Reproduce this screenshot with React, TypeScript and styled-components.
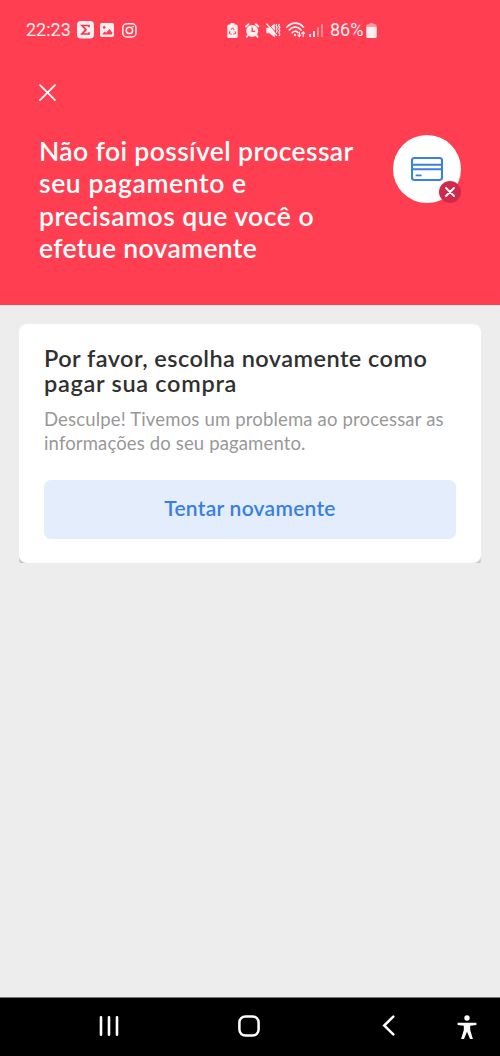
import React from "react";
import styled, { createGlobalStyle } from "styled-components";

const GlobalStyle = createGlobalStyle`
  * { box-sizing: border-box; }
  body { margin: 0; background: #ededed; }
  svg { display: block; flex: none; }
`;

const Screen = styled.main`
  width: 500px;
  height: 1056px;
  display: flex;
  flex-direction: column;
  background: #ededed;
  font-family: Lato, "Open Sans", sans-serif;
  overflow: hidden;
`;

const Header = styled.header`
  height: 305px;
  background: #ff3f51;
  color: #fff;
`;

const StatusBar = styled.div`
  display: flex;
  align-items: center;
  height: 60px;
  padding: 0 123px 0 26px;
  font: 400 18px/20px Roboto, sans-serif;
  color: #ffeef0;
`;

const StatusGroup = styled.div<{ $push?: boolean }>`
  display: flex;
  align-items: center;
  margin-left: ${(p) => (p.$push ? "auto" : "0")};
`;

const Glyph = styled.svg<{ $gap: number }>`
  margin-left: ${(p) => p.$gap}px;
`;

const StatusText = styled.span<{ $gap?: number; $width: number }>`
  margin-left: ${(p) => p.$gap ?? 0}px;
  width: ${(p) => p.$width}px;
  white-space: nowrap;
`;

const CloseButton = styled.button`
  display: block;
  margin: 23px 0 0 38px;
  padding: 0;
  border: 0;
  background: none;
  color: #fff;
`;

const Hero = styled.div`
  display: flex;
  justify-content: space-between;
  padding: 32px 39px 0;
`;

const Title = styled.h1`
  margin: 0;
  font-size: 26.5px;
  line-height: 32.4px;
  font-weight: 600;
`;

const Line = styled.span<{ $spacing: number }>`
  display: block;
  white-space: nowrap;
  letter-spacing: ${(p) => p.$spacing}px;
`;

const CardBadge = styled.div`
  position: relative;
  display: grid;
  place-items: center;
  width: 68px;
  height: 68px;
  border-radius: 50%;
  background: #fff;
`;

const ErrorMark = styled.div`
  position: absolute;
  right: 0;
  bottom: 0;
  display: grid;
  place-items: center;
  width: 22px;
  height: 22px;
  border-radius: 50%;
  background: #d1294b;
`;

const Content = styled.section`
  flex: 1;
  padding: 19px 19px 0;
`;

const CardShade = styled.div`
  border-radius: 8px 8px 2px 2px;
  background: linear-gradient(#e6e6e6 97%, #c4c4c4);
`;

const Card = styled.article`
  height: 239px;
  padding: 22px 25px 25px;
  border-radius: 8px;
  background: #fff;
`;

const CardTitle = styled.h2`
  margin: 0;
  color: #303030;
  font-size: 23.5px;
  line-height: 24.5px;
  font-weight: 600;
`;

const CardText = styled.p`
  margin: 12px 0 0;
  color: #989898;
  font-size: 18.5px;
  line-height: 24.3px;
  font-weight: 400;
`;

const RetryButton = styled.button`
  display: flex;
  align-items: center;
  justify-content: center;
  width: 100%;
  height: 59px;
  margin-top: 24px;
  padding: 0 0 2px;
  border: 0;
  border-radius: 7px;
  background: #e3edfb;
  color: #3a7fe0;
  font: 600 21px/24px Lato, sans-serif;
`;

const NavBar = styled.nav`
  display: flex;
  align-items: center;
  height: 59px;
  padding: 0 22px 3px 99px;
  border-top: 1px solid #777;
  background: #000;
`;

const NavIcon = styled.svg<{ $before?: number; $drop?: number }>`
  margin-left: ${(p) => p.$before ?? 0}px;
  margin-top: ${(p) => p.$drop ?? 0}px;
`;

export default function App() {
  return (
    <Screen>
      <GlobalStyle />
      <Header>
        <StatusBar>
          <StatusGroup>
            <StatusText $width={45}>22:23</StatusText>
            <Glyph $gap={6} width="17" height="18" viewBox="0 0 17 18">
              <rect width="17" height="17.5" rx="4" fill="#ffeef0" />
              <path d="M12 6.2V4.5H5l4 4.2-4 4.3h7v-1.8" fill="none" stroke="#f0344c" strokeWidth="1.7" />
            </Glyph>
            <Glyph $gap={6} width="14" height="14" viewBox="0 0 14 14">
              <rect width="14" height="14" rx="2" fill="#ffeef0" />
              <circle cx="4.2" cy="4.4" r="1.3" fill="#ff3f51" />
              <path d="M2 11.4l2.6-3 1.6 1.4L9.4 6l2.8 3.2v2.2z" fill="#ff3f51" />
            </Glyph>
            <Glyph $gap={8} width="15" height="15" viewBox="0 0 15 15" fill="none" stroke="#ffeef0" strokeWidth="1.5">
              <rect x=".8" y=".8" width="13.2" height="13.2" rx="4" />
              <circle cx="7.4" cy="7.4" r="3.2" />
              <circle cx="11.1" cy="3.8" r=".8" fill="#ffeef0" stroke="none" />
            </Glyph>
          </StatusGroup>
          <StatusGroup $push>
            <Glyph $gap={0} width="11" height="15" viewBox="0 0 11 15">
              <path d="M3.5 0h4v1.5H9a1.7 1.7 0 0 1 1.7 1.7v10A1.7 1.7 0 0 1 9 15H2A1.7 1.7 0 0 1 .3 13.2v-10A1.7 1.7 0 0 1 2 1.5h1.5z" fill="#ffeef0" />
              <path d="M3.9 7l1.6-2.2L7.1 7M8 8.2l.8 2.2-2.4.7M4.7 11.2l-2.5-.7.7-2.4" fill="none" stroke="#ff3f51" strokeWidth="1" />
            </Glyph>
            <Glyph $gap={7} width="15" height="15" viewBox="0 0 15 15">
              <circle cx="7.2" cy="7.9" r="6" fill="#ffeef0" />
              <path d="M1 3.5L3.6 1.1M13.4 3.5L10.8 1.1M3 12l-1.2 1.9M11.4 12l1.2 1.9" stroke="#ffeef0" strokeWidth="1.8" strokeLinecap="round" />
              <path d="M7.2 4.6v3.7h3" fill="none" stroke="#ff3f51" strokeWidth="1.3" />
            </Glyph>
            <Glyph $gap={6} width="15" height="15" viewBox="0 0 15 15">
              <path d="M.3 4.8h3.2L8.8.6v13.8L3.5 10.2H.3z" fill="#ffeef0" />
              <path d="M1.8.4l9 10.4" stroke="#ff3f51" strokeWidth="1" />
              <path d="M.8 1l9.6 11.2" stroke="#ffeef0" strokeWidth="1.4" strokeLinecap="round" />
              <path d="M10.8 1l-.8 1.7 1.2 1.6-1 1.8 1 1.7-1 1.7M13.4 1l-.8 1.7 1.2 1.6-1 1.8 1 1.7-1 1.7 1 1.7-.8 1.8" fill="none" stroke="#ffeef0" strokeWidth="1.2" />
            </Glyph>
            <Glyph $gap={5} width="20" height="16" viewBox="0 0 20 16" fill="none" stroke="#ffeef0" strokeWidth="1.7" strokeLinecap="round">
              <path d="M.9 5.2C5.5-.3 13-.3 17.5 5.2M3.4 8c3.3-4 8.3-4 11.6 0M6.2 10.7c1.7-1.9 4-1.9 5.600-.4" />
              <circle cx="9" cy="13" r="1.2" fill="#ffeef0" stroke="none" />
              <path d="M13.3 10.2v4.3M11.9 13.2l1.4 1.5 1.4-1.5M17.2 14.3V9.9M15.8 11.3l1.4-1.5 1.4 1.5" strokeWidth="1.2" />
            </Glyph>
            <Glyph $gap={3} width="14" height="15" viewBox="0 0 14 15" fill="#ffeef0">
              <rect x=".2" y="11" width="1.9" height="3" />
              <rect x="4" y="8" width="1.9" height="6" />
              <rect x="8" y="4.5" width="1.9" height="9.5" opacity=".45" />
              <rect x="12" y="1" width="1.9" height="13" opacity=".45" />
            </Glyph>
            <StatusText $gap={7} $width={34}>86%</StatusText>
            <Glyph $gap={2} width="11" height="15" viewBox="0 0 11 15" fill="#ffeef0">
              <path d="M3.5 0h4v1.3H9A1.7 1.7 0 0 1 10.7 3v1H.3V3A1.7 1.7 0 0 1 2 1.3h1.5z" opacity=".5" />
              <path d="M.3 4h10.4v9.2A1.7 1.7 0 0 1 9 15H2a1.7 1.7 0 0 1-1.7-1.8z" />
            </Glyph>
          </StatusGroup>
        </StatusBar>
        <CloseButton aria-label="Fechar">
          <svg width="20" height="20" viewBox="0 0 20 20">
            <path d="M2 2.2l15 15M17 2.2l-15 15" stroke="currentColor" strokeWidth="1.7" strokeLinecap="round" />
          </svg>
        </CloseButton>
        <Hero>
          <Title>
            <Line $spacing={0.38}>Não foi possível processar</Line>
            <Line $spacing={0.6}>seu pagamento e</Line>
            <Line $spacing={0.5}>precisamos que você o</Line>
            <Line $spacing={0.32}>efetue novamente</Line>
          </Title>
          <CardBadge>
            <svg width="32" height="26" viewBox="0 0 32 26" fill="none" stroke="#3a80df" strokeWidth="2.1">
              <rect x="1" y="2" width="30" height="22" rx="2.5" />
              <path d="M1 8.7h30M1 13.2h30" />
              <path d="M4.6 19.4h6" strokeWidth="1.8" />
            </svg>
            <ErrorMark>
              <svg width="10" height="10" viewBox="0 0 10 10">
                <path d="M1 1l8 8M9 1L1 9" stroke="#fff" strokeWidth="1.9" strokeLinecap="round" />
              </svg>
            </ErrorMark>
          </CardBadge>
        </Hero>
      </Header>
      <Content>
        <CardShade>
          <Card>
            <CardTitle>
              <Line $spacing={0.45}>Por favor, escolha novamente como</Line>
              <Line $spacing={0.7}>pagar sua compra</Line>
            </CardTitle>
            <CardText>
              <Line $spacing={0.17}>Desculpe! Tivemos um problema ao processar as</Line>
              <Line $spacing={0.14}>informações do seu pagamento.</Line>
            </CardText>
            <RetryButton>
              <Line $spacing={0.27}>Tentar novamente</Line>
            </RetryButton>
          </Card>
        </CardShade>
      </Content>
      <NavBar>
        <NavIcon width="20" height="20" viewBox="0 0 20 20">
          <path d="M2 1.3v17.4M10 1.3v17.4M18 1.3v17.4" stroke="#fff" strokeWidth="2.6" strokeLinecap="round" />
        </NavIcon>
        <NavIcon $before={119} width="22" height="22" viewBox="0 0 22 22">
          <rect x="1.4" y="1.4" width="19.2" height="19.2" rx="6" fill="none" stroke="#fff" strokeWidth="2.5" />
        </NavIcon>
        <NavIcon $before={122} width="13" height="21" viewBox="0 0 13 21">
          <path d="M11.3 1.6L2.2 10.5l9.1 8.9" fill="none" stroke="#fff" strokeWidth="2.5" strokeLinecap="round" />
        </NavIcon>
        <NavIcon $before={62} $drop={3} width="20" height="25" viewBox="0 0 20 25" fill="#fff">
          <circle cx="10" cy="3" r="2.7" />
          <path d="M.6 7.8h18.8v2.2L13.2 10.7v4.3l2.7 9h-2.9L10 16.8 7 24H4.1l2.7-9v-4.3L.6 10z" />
        </NavIcon>
      </NavBar>
    </Screen>
  );
}
